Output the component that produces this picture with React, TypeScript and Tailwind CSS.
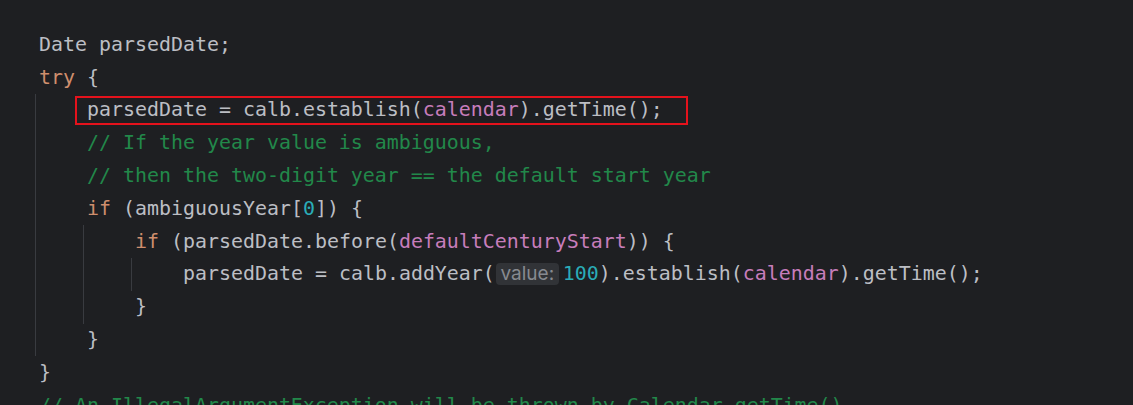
import React from "react";

const C = {
  t: "text-[#bcbec4]",
  k: "text-[#cf8e6d]",
  c: "text-[#22884a]",
  p: "text-[#c77dbb]",
  n: "text-[#2aacb8]",
};

type Seg = [string, string];

function Line({ indent, children }: { indent: number; children: React.ReactNode }) {
  return (
    <div className="flex h-[32.8px] pl-[35px] items-stretch whitespace-pre">
      {Array.from({ length: indent }).map((_, i) => (
        <span key={i} className="w-[48px] shrink-0 border-l border-[#393b40]" />
      ))}
      <span className="flex items-center pl-[4px]">{children}</span>
    </div>
  );
}

function S({ segs }: { segs: Seg[] }) {
  return (
    <>
      {segs.map(([cls, txt], i) => (
        <span key={i} className={cls}>
          {txt}
        </span>
      ))}
    </>
  );
}

export default function App() {
  return (
    <div
      className="w-[1133px] h-[405px] overflow-hidden bg-[#1e1f22] pt-[28.4px] text-[19.93px]"
      style={{ fontFamily: '"DejaVu Sans Mono", "Liberation Mono", monospace' }}
    >
      <Line indent={0}>
        <S segs={[[C.t, "Date parsedDate;"]]} />
      </Line>
      <Line indent={0}>
        <S segs={[[C.k, "try"], [C.t, " {"]]} />
      </Line>
      <Line indent={1}>
        <span className="ml-[-12px] flex h-[29px] items-center border-2 border-[#e5121c] pl-[10px] pr-[23px]">
          <S
            segs={[
              [C.t, "parsedDate = calb.establish("],
              [C.p, "calendar"],
              [C.t, ").getTime();"],
            ]}
          />
        </span>
      </Line>
      <Line indent={1}>
        <S segs={[[C.c, "// If the year value is ambiguous,"]]} />
      </Line>
      <Line indent={1}>
        <S segs={[[C.c, "// then the two-digit year == the default start year"]]} />
      </Line>
      <Line indent={1}>
        <S
          segs={[
            [C.k, "if"],
            [C.t, " (ambiguousYear["],
            [C.n, "0"],
            [C.t, "]) {"],
          ]}
        />
      </Line>
      <Line indent={2}>
        <S
          segs={[
            [C.k, "if"],
            [C.t, " (parsedDate.before("],
            [C.p, "defaultCenturyStart"],
            [C.t, ")) {"],
          ]}
        />
      </Line>
      <Line indent={3}>
        <S segs={[[C.t, "parsedDate = calb.addYear("]]} />
        <span
          className="ml-[1px] mr-[4px] flex h-[22px] w-[63px] items-center justify-center rounded-[4px] bg-[#313337] text-[19px] text-[#878a90]"
          style={{ fontFamily: "Inter, 'Noto Sans', sans-serif" }}
        >
          value:
        </span>
        <S
          segs={[
            [C.n, "100"],
            [C.t, ").establish("],
            [C.p, "calendar"],
            [C.t, ").getTime();"],
          ]}
        />
      </Line>
      <Line indent={2}>
        <S segs={[[C.t, "}"]]} />
      </Line>
      <Line indent={1}>
        <S segs={[[C.t, "}"]]} />
      </Line>
      <Line indent={0}>
        <S segs={[[C.t, "}"]]} />
      </Line>
      <Line indent={0}>
        <S segs={[[C.c, "// An IllegalArgumentException will be thrown by Calendar.getTime()"]]} />
      </Line>
    </div>
  );
}
